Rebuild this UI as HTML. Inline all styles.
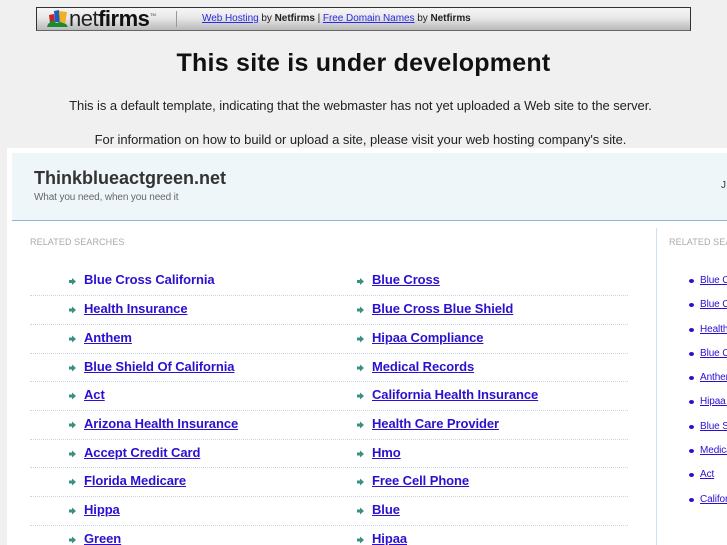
<!DOCTYPE html>
<html><head><meta charset="utf-8"><style>
html,body{margin:0;padding:0;width:727px;height:545px;overflow:hidden;background:#f0f0f0;font-family:"Liberation Sans",sans-serif}
#p{position:relative;width:727px;height:545px;overflow:hidden}
#p div,#p a,#p svg{position:absolute;white-space:nowrap}
#p .bn a{position:static;color:#2a2ae0}
a{color:#2a10d0}
.l{font-size:13px;font-weight:bold;line-height:16px;color:#2a10d0;text-decoration:underline;letter-spacing:-.08px}
.n{text-decoration:none}
.d{left:30px;width:598px;height:0;border-top:1px dotted #c3d6ea}
.s{font-size:10px;line-height:12px;color:#2a10d0;text-decoration:underline;letter-spacing:-.1px}
.b{width:5px;height:4px;border-radius:50%;background:#2a10d0;left:689px}
.t{font-size:13px;color:#222;line-height:16px;left:0;width:721px;text-align:center;letter-spacing:-.058px}
</style></head><body><div id="p">
<div style="left:36px;top:7px;width:653px;height:22px;border:1px solid #333;border-bottom-color:#666;background:linear-gradient(#f6f6f6,#e8e8e8 45%,#b9b9b9)"></div>
<svg style="left:47px;top:9px" width="24" height="20" viewBox="0 0 24 20"><path d="M2 6l5-1 1 9H3z" fill="#c22"/><path d="M7 2l5-1 1 12H8z" fill="#1a5fc0"/><path d="M12 2l8 1-2 12h-5z" fill="#f0b020"/><path d="M0 18l1-3 5-4 3 3 4-1 6 2 2 3z" fill="#1a8a30"/></svg>
<div style="left:69px;top:8px;font-size:22px;line-height:22px;color:#222;letter-spacing:-.5px">net<b style="color:#111">firms</b></div>
<div style="left:150px;top:12px;font-size:4px;line-height:5px;color:#333">TM</div>
<div style="left:176px;top:11px;width:1px;height:16px;background:#999"></div>
<div class="bn" style="left:202px;top:13px;font-size:10px;line-height:12px;color:#222;letter-spacing:-.04px"><a href="#">Web Hosting</a> by <b>Netfirms</b> | <a href="#">Free Domain Names</a> by <b>Netfirms</b></div>
<div style="left:0;width:727px;top:47px;text-align:center;font-size:25px;line-height:32px;font-weight:bold;color:#111;letter-spacing:.24px">This site is under development</div>
<div class="t" style="top:98px">This is a default template, indicating that the webmaster has not yet uploaded a Web site to the server.</div>
<div class="t" style="top:132px">For information on how to build or upload a site, please visit your web hosting company's site.</div>
<div style="left:7px;top:148px;width:720px;height:397px;background:#fff"></div>
<div style="left:12px;top:153px;width:715px;height:67px;background:#eff6f9;border-bottom:1px solid #8db4ea"></div>
<div style="left:34px;top:166px;font-size:18px;line-height:24px;font-weight:bold;color:#333">Thinkblueactgreen.net</div>
<div style="left:34px;top:192px;font-size:10px;line-height:12px;color:#666;letter-spacing:-.13px">What you need, when you need it</div>
<div style="left:721px;top:180px;font-size:10px;line-height:12px;color:#333">J</div>
<div style="left:30px;top:236px;font-size:9px;line-height:12px;color:#aaa;letter-spacing:.1px">RELATED SEARCHES</div>
<div style="left:669px;top:236px;font-size:9px;line-height:12px;color:#aaa;letter-spacing:.1px">RELATED SEARCHES</div>
<div style="left:656px;top:228px;width:1px;height:317px;background:#cfe0f5"></div>

<div class="d" style="top:295px"></div><div class="d" style="top:324px"></div><div class="d" style="top:353px"></div><div class="d" style="top:381px"></div><div class="d" style="top:410px"></div><div class="d" style="top:439px"></div><div class="d" style="top:467px"></div><div class="d" style="top:496px"></div><div class="d" style="top:525px"></div>

<a class="l n" href="#" style="left:84px;top:272px">Blue Cross California</a>
<a class="l" href="#" style="left:84px;top:301px">Health Insurance</a>
<a class="l" href="#" style="left:84px;top:330px">Anthem</a>
<a class="l" href="#" style="left:84px;top:359px">Blue Shield Of California</a>
<a class="l" href="#" style="left:84px;top:387px">Act</a>
<a class="l" href="#" style="left:84px;top:416px">Arizona Health Insurance</a>
<a class="l" href="#" style="left:84px;top:445px">Accept Credit Card</a>
<a class="l" href="#" style="left:84px;top:473px">Florida Medicare</a>
<a class="l" href="#" style="left:84px;top:502px">Hippa</a>
<a class="l" href="#" style="left:84px;top:531px">Green</a>

<a class="l" href="#" style="left:372px;top:272px">Blue Cross</a>
<a class="l" href="#" style="left:372px;top:301px">Blue Cross Blue Shield</a>
<a class="l" href="#" style="left:372px;top:330px">Hipaa Compliance</a>
<a class="l" href="#" style="left:372px;top:359px">Medical Records</a>
<a class="l" href="#" style="left:372px;top:387px">California Health Insurance</a>
<a class="l" href="#" style="left:372px;top:416px">Health Care Provider</a>
<a class="l" href="#" style="left:372px;top:445px">Hmo</a>
<a class="l" href="#" style="left:372px;top:473px">Free Cell Phone</a>
<a class="l" href="#" style="left:372px;top:502px">Blue</a>
<a class="l" href="#" style="left:372px;top:531px">Hipaa</a>

<svg style="left:0;top:0" width="727" height="545"><defs><path id="q" d="M0 -1.500h3v-2l4 3.500-4 3.500v-2h-3z" fill="#3a9080"/></defs>
<use href="#q" x="69" y="281.500"/><use href="#q" x="69" y="310"/><use href="#q" x="69" y="339"/><use href="#q" x="69" y="368"/><use href="#q" x="69" y="396"/><use href="#q" x="69" y="425"/><use href="#q" x="69" y="454"/><use href="#q" x="69" y="482"/><use href="#q" x="69" y="511"/><use href="#q" x="69" y="540"/>
<use href="#q" x="357" y="281.500"/><use href="#q" x="357" y="310"/><use href="#q" x="357" y="339"/><use href="#q" x="357" y="368"/><use href="#q" x="357" y="396"/><use href="#q" x="357" y="425"/><use href="#q" x="357" y="454"/><use href="#q" x="357" y="482"/><use href="#q" x="357" y="511"/><use href="#q" x="357" y="540"/>
</svg>

<div class="b" style="top:279px"></div><div class="b" style="top:303px"></div><div class="b" style="top:328px"></div><div class="b" style="top:352px"></div><div class="b" style="top:376px"></div><div class="b" style="top:400px"></div><div class="b" style="top:425px"></div><div class="b" style="top:449px"></div><div class="b" style="top:473px"></div><div class="b" style="top:498px"></div>
<a class="s" href="#" style="left:700px;top:275px">Blue Cross California</a>
<a class="s" href="#" style="left:700px;top:299px">Blue Cross</a>
<a class="s" href="#" style="left:700px;top:324px">Health Insurance</a>
<a class="s" href="#" style="left:700px;top:348px">Blue Cross Blue Shield</a>
<a class="s" href="#" style="left:700px;top:372px">Anthem</a>
<a class="s" href="#" style="left:700px;top:396px">Hipaa Compliance</a>
<a class="s" href="#" style="left:700px;top:421px">Blue Shield Of California</a>
<a class="s" href="#" style="left:700px;top:445px">Medical Records</a>
<a class="s" href="#" style="left:700px;top:469px">Act</a>
<a class="s" href="#" style="left:700px;top:494px">California Health Insurance</a>
</div></body></html>
